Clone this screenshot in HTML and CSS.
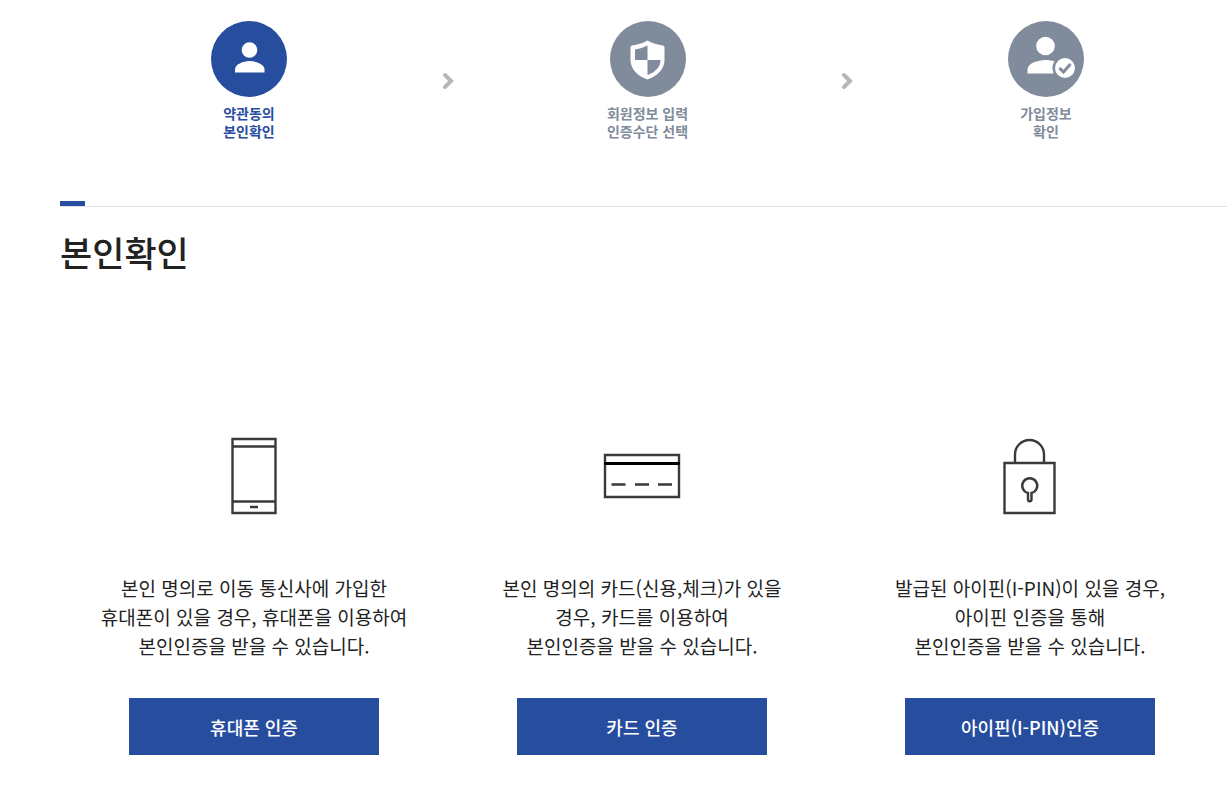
FILE: index.html
```html
<!DOCTYPE html>
<html lang="ko">
<head>
    <meta charset="UTF-8">
    <meta name="viewport" content="width=device-width, initial-scale=1.0">
    <title>본인확인</title>
    <link rel="stylesheet" href="styles.css">
</head>
<body>

<!-- Join steps -->
<ol class="steps">
    <li class="step on">
        <svg class="step-icon" viewBox="0 0 76 76">
            <circle cx="38" cy="38" r="38" fill="currentColor"/>
            <circle cx="38.5" cy="29" r="7.8" fill="#fff"/>
            <path d="M24 51.500v-3c0-5 8-8.500 14.500-8.500s15 3.500 15 8.500v3z" fill="#fff"/>
        </svg>
        <span>약관동의<br>본인확인</span>
    </li>
    <li class="arrow">
        <svg viewBox="0 0 12 18"><path d="M3 3l6 6-6 6"/></svg>
    </li>
    <li class="step">
        <svg class="step-icon" viewBox="0 0 76 76">
            <circle cx="38" cy="38" r="38" fill="currentColor"/>
            <path d="M37.500 19.500c5 3 10 4 15.500 5q1.500.3 1.500 2v12.500c0 9-7 16-17 19.500-10-3.500-17-10.500-17-19.500V26.500q0-1.700 1.500-2c5.500-1 10.500-2 15.500-5z" fill="#fff"/>
            <path d="M37.500 24.500v14.500H25V28.500c5-.7 8.500-2 12.500-4zM37.500 39h13c0 7-5 12-13 15z" fill="currentColor"/>
        </svg>
        <span>회원정보 입력<br>인증수단 선택</span>
    </li>
    <li class="arrow">
        <svg viewBox="0 0 12 18"><path d="M3 3l6 6-6 6"/></svg>
    </li>
    <li class="step">
        <svg class="step-icon" viewBox="0 0 76 76">
            <circle cx="38" cy="38" r="38" fill="currentColor"/>
            <circle cx="37.500" cy="25" r="9.300" fill="#fff"/>
            <path d="M19.500 52.500v-4c0-6 10-9.500 18-9.500 3.500 0 6.500.5 9.500 1.500v12z" fill="#fff"/>
            <circle cx="57" cy="47" r="12.500" fill="currentColor"/>
            <circle cx="57" cy="47" r="10" fill="#fff"/>
            <path d="M51.500 47l4 4 7-8" fill="none" stroke="currentColor" stroke-width="3"/>
        </svg>
        <span>가입정보<br>확인</span>
    </li>
</ol>

<div class="content">
    <h1 class="title">본인확인</h1>

    <!-- Certification methods -->
    <div class="methods">
        <div class="method">
            <svg class="method-icon" viewBox="0 0 78 78">
                <path d="M17.500 2h43v74h-43zM17.500 9.500h43M17.500 64.500h43M35 70h8"/>
            </svg>
            <p>본인 명의로 이동 통신사에 가입한<br>휴대폰이 있을 경우, 휴대폰을 이용하여<br>본인인증을 받을 수 있습니다.</p>
            <button type="button">휴대폰 인증</button>
        </div>
        <div class="method">
            <svg class="method-icon" viewBox="0 0 78 78">
                <path d="M2 18h74v42H2zM8.500 47.500h14M32 47.500h14M55 47.500h14"/>
                <path d="M1 26.500h76" class="stripe"/>
            </svg>
            <p>본인 명의의 카드(신용,체크)가 있을<br>경우, 카드를 이용하여<br>본인인증을 받을 수 있습니다.</p>
            <button type="button">카드 인증</button>
        </div>
        <div class="method">
            <svg class="method-icon" viewBox="0 0 78 78">
                <path d="M13.500 26h50v50h-50zM24 26V17.500a14.500 14.500 0 0 1 29 0V26"/>
                <path d="M37 56a7.500 7.500 0 1 1 3.500 0v6.500a1.700 1.700 0 0 1-3.500 0z"/>
            </svg>
            <p>발급된 아이핀(I-PIN)이 있을 경우,<br>아이핀 인증을 통해<br>본인인증을 받을 수 있습니다.</p>
            <button type="button">아이핀(I-PIN)인증</button>
        </div>
    </div>
</div>

</body>
</html>
```
FILE: styles.css
```css
body {
    font-family: "Noto Sans CJK KR", "Noto Sans", sans-serif;
    background-color: #fff;
    color: #222;
    margin: 0;
    padding: 0;
}
.steps {
    display: flex;
    justify-content: space-between;
    list-style: none;
    margin: 0;
    padding: 21px 136px 61px 204px;
}
.step {
    width: 90px;
    display: flex;
    flex-direction: column;
    align-items: center;
    gap: 7px;
    color: #808b9b;
    font-size: 14px;
    font-weight: 700;
    line-height: 18px;
    text-align: center;
    white-space: nowrap;
}
.step.on {
    color: #274d9e;
}
.step-icon {
    width: 76px;
    height: 76px;
}
.arrow {
    display: flex;
    align-items: center;
}
.arrow svg {
    width: 12px;
    height: 18px;
    fill: none;
    stroke: #b7b7b7;
    stroke-width: 4;
    stroke-linecap: round;
}
.content {
    margin-left: 60px;
}
.content::before {
    content: "";
    display: block;
    width: 25px;
    height: 5px;
    background-color: #274d9e;
}
.title {
    margin: 0;
    padding-top: 19px;
    border-top: 1px solid #e1e1e1;
    font-size: 35px;
    font-weight: 500;
    line-height: 52px;
}
.methods {
    display: grid;
    grid-template-columns: repeat(3, 1fr);
    padding: 159px 3px 42px 0;
}
.method {
    display: flex;
    flex-direction: column;
    align-items: center;
    text-align: center;
}
.method-icon {
    width: 78px;
    height: 78px;
    fill: none;
    stroke: #3a3a3a;
    stroke-width: 2.4;
}
.method-icon .stripe {
    stroke: #000;
    stroke-width: 3;
}
.method p {
    margin: 58px 0 38px;
    font-size: 19px;
    line-height: 29px;
    white-space: nowrap;
}
.method button {
    width: 250px;
    height: 57px;
    border: 0;
    background-color: #274d9e;
    color: #fff;
    font-family: inherit;
    font-size: 18px;
    font-weight: 500;
    cursor: pointer;
}
.method button:hover {
    background-color: #1d3d82;
}
```
